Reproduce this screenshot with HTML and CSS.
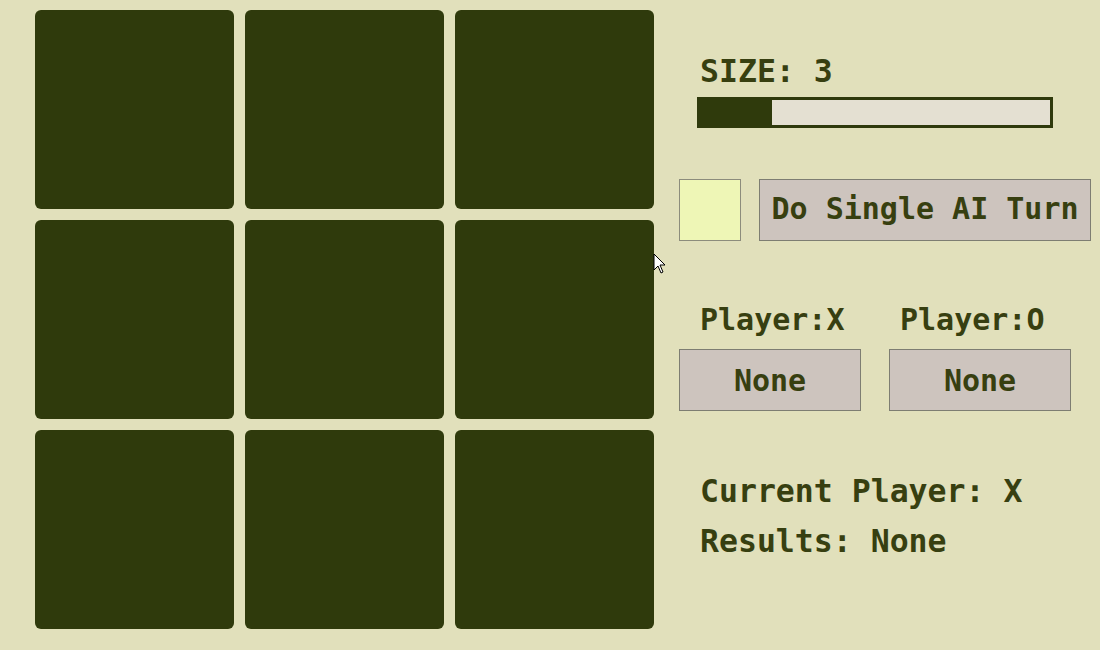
FILE: index.html
```html
<!DOCTYPE html>
<html>
<head>
<meta charset="utf-8">
<link rel="stylesheet" href="styles.css">
</head>
<body>
<div class="app">
  <div class="board">
    <div class="cell"></div><div class="cell"></div><div class="cell"></div>
    <div class="cell"></div><div class="cell"></div><div class="cell"></div>
    <div class="cell"></div><div class="cell"></div><div class="cell"></div>
  </div>
  <div class="panel">
    <div class="size-label">SIZE: 3</div>
    <div class="slider"><div class="slider-fill"></div></div>
    <div class="ai-row">
      <div class="swatch"></div>
      <button class="btn ai-btn">Do Single AI Turn</button>
    </div>
    <div class="players">
      <div class="player">
        <div class="player-label lx">Player:X</div>
        <button class="btn player-btn">None</button>
      </div>
      <div class="player">
        <div class="player-label lo">Player:O</div>
        <button class="btn player-btn">None</button>
      </div>
    </div>
    <div class="status">
      <div class="line">Current Player: X</div>
      <div class="line">Results: None</div>
    </div>
  </div>
</div>
<svg class="cursor" width="14" height="22" viewBox="0 0 14 22"><path d="M1 1 L1 17 L5 13 L8 20 L10 19 L7 12 L12 12 Z" fill="#fff" stroke="#000" stroke-width="1"/></svg>
</body>
</html>
```
FILE: styles.css
```css
html, body {
  margin: 0;
  padding: 0;
}
body {
  background: #e1e0bb;
  width: 1100px;
  height: 650px;
  overflow: hidden;
  position: relative;
  font-family: "DejaVu Sans Mono", monospace;
  font-weight: bold;
  color: #373f10;
}
.app {
  display: flex;
  align-items: flex-start;
  padding: 10px 0 0 35px;
}
.board {
  display: grid;
  grid-template-columns: repeat(3, 199px);
  grid-template-rows: repeat(3, 199px);
  gap: 11px;
}
.cell {
  background: #2f3a0c;
  border-radius: 6px;
}
.panel {
  margin-left: 25px;
  width: 420px;
  display: flex;
  flex-direction: column;
}
.size-label {
  font-size: 31.5px;
  line-height: 37px;
  margin: 43px 0 0 21px;
}
.slider {
  margin: 7px 0 0 18px;
  width: 350px;
  height: 25px;
  border: 3px solid #2f3a0c;
  background: #e4e0d2;
}
.slider-fill {
  width: 72px;
  height: 100%;
  background: #2f3a0c;
}
.ai-row {
  display: flex;
  gap: 18px;
  margin-top: 51px;
}
.swatch {
  width: 60px;
  height: 60px;
  border: 1px solid #8c8c7c;
  background: #eef6b6;
}
.btn {
  font-family: "DejaVu Sans Mono", monospace;
  font-weight: bold;
  color: #373f10;
  background: #cdc4be;
  border: 1px solid #7d7d72;
  padding: 0 0 3px 0;
  margin: 0;
  height: 62px;
}
.ai-btn {
  width: 332px;
  font-size: 30px;
}
.players {
  display: flex;
  gap: 28px;
  margin-top: 61px;
}
.player {
  display: flex;
  flex-direction: column;
}
.player-label {
  font-size: 30px;
  line-height: 36px;
  margin-bottom: 11px;
}
.lx { margin-left: 21px; }
.lo { margin-left: 11px; }
.player-btn {
  width: 182px;
  font-size: 30px;
  padding: 0;
}
.status {
  margin: 55px 0 0 21px;
}
.line {
  font-size: 31.5px;
  line-height: 50px;
}
.cursor {
  position: absolute;
  left: 653px;
  top: 253px;
}
```
